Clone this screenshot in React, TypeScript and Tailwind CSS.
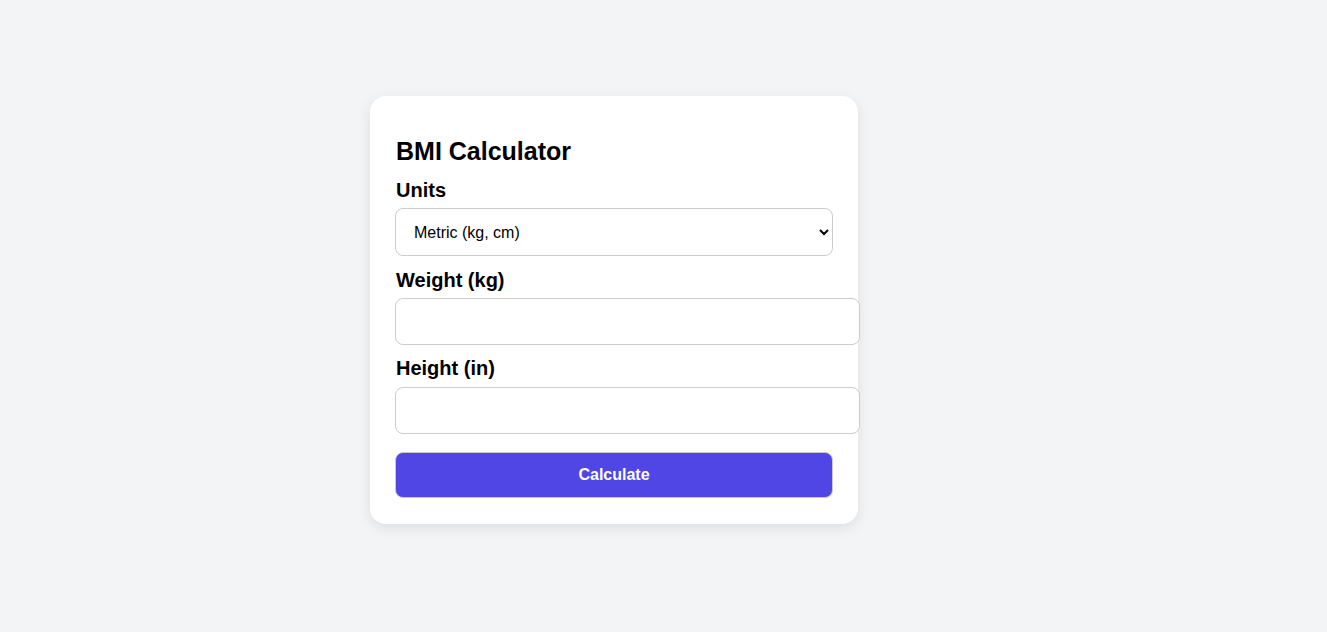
import React, { useState } from 'react';

const App: React.FC = () => {
  const [units, setUnits] = useState('metric');
  const [weight, setWeight] = useState('');
  const [height, setHeight] = useState('');

  return (
    <div className="min-h-screen bg-[#f3f4f6] pl-[370px] pt-[96px] font-['Liberation_Sans',Arial,sans-serif] text-black">
      <div className="w-[488px] rounded-2xl bg-white px-[25px] pt-[25px] pb-[26px] shadow-[0_4px_14px_rgba(0,0,0,0.09)]">
        <h2 className="mt-[15px] pl-px text-[25px] leading-[30px] font-bold">BMI Calculator</h2>

        {/* Units */}
        <label className="mt-[12px] mb-[6px] block pl-px text-[20px] leading-[24px] font-bold">Units</label>
        <select
          value={units}
          onChange={(e) => setUnits(e.target.value)}
          className="block h-[48px] w-full rounded-lg border border-[#cccccc] bg-white pl-[14px] pr-2 pt-px text-[16px]"
        >
          <option value="metric">Metric (kg, cm)</option>
          <option value="imperial">Imperial (lb, in)</option>
        </select>

        {/* Weight */}
        <label className="mt-3 mb-[6px] block pl-px text-[20px] leading-[24px] font-bold">Weight (kg)</label>
        <input
          type="number"
          value={weight}
          onChange={(e) => setWeight(e.target.value)}
          className="block h-[47px] w-[465px] rounded-lg border border-[#cccccc] bg-white px-3 text-[16px]"
        />

        {/* Height */}
        <label className="mt-[11px] mb-[7px] block pl-px text-[20px] leading-[24px] font-bold">Height (in)</label>
        <input
          type="number"
          value={height}
          onChange={(e) => setHeight(e.target.value)}
          className="block h-[47px] w-[465px] rounded-lg border border-[#cccccc] bg-white px-3 text-[16px]"
        />

        <button className="mt-[18px] block h-[46px] w-full rounded-lg border border-[#c7c7d6] bg-[#4f46e5] text-[16px] font-bold text-white">
          Calculate
        </button>
      </div>
    </div>
  );
};

export default App;
